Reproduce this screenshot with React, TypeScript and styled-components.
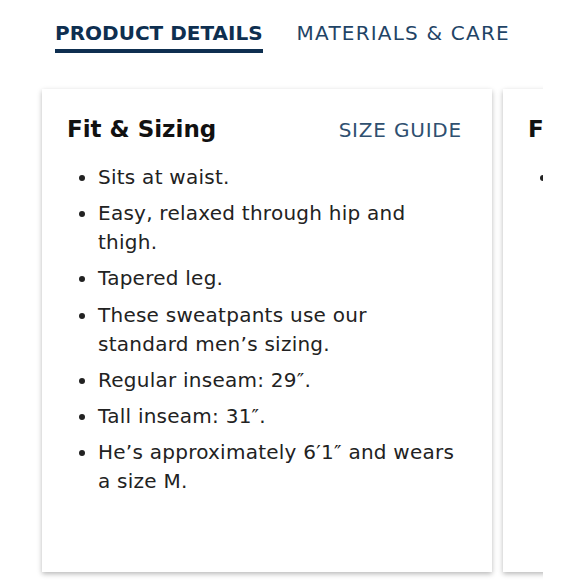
import styled, { createGlobalStyle } from 'styled-components';

const Global = createGlobalStyle`
  html, body {
    margin: 0;
    background: #fff;
  }
  body {
    font-family: "DejaVu Sans", "Liberation Sans", sans-serif;
  }
`

const Page = styled.div`
  width: 579px;
  height: 580px;
  overflow: hidden;
`

const Tabs = styled.div`
  display: flex;
  gap: 34px;
  padding: 19px 0 0 55px;
  height: 70px;
  box-sizing: border-box;
`

const Tab = styled.div<{ $active?: boolean }>`
  font-size: 20px;
  line-height: 28px;
  letter-spacing: ${p => (p.$active ? '0' : '1.2px')};
  color: ${p => (p.$active ? '#0e2f50' : '#1f4466')};
  font-weight: ${p => (p.$active ? 700 : 400)};
  height: 30px;
  border-bottom: 4px solid ${p => (p.$active ? '#0e2f50' : 'transparent')};
`

const Viewport = styled.div`
  width: 543px;
  overflow: hidden;
  padding: 19px 0 8px 42px;
  box-sizing: border-box;
`

const Track = styled.div`
  display: flex;
  gap: 11px;
`

const Card = styled.div`
  flex: none;
  width: 450px;
  height: 483px;
  box-sizing: border-box;
  padding: 24px 25px;
  background: #fff;
  box-shadow: 0 2px 5px rgba(0, 0, 0, 0.28);
`

const CardHead = styled.div`
  display: flex;
  justify-content: space-between;
  align-items: baseline;
`

const Title = styled.h3`
  margin: 0;
  font-size: 23px;
  line-height: 32px;
  font-weight: 700;
  color: #111;
`

const Guide = styled.a`
  font-size: 20px;
  color: #2f5070;
  letter-spacing: 0.8px;
  text-decoration: none;
  margin-right: 5px;
`

const List = styled.ul`
  margin: 18px 0 0;
  padding: 0 9px 0 31px;
`

const Item = styled.li`
  font-size: 20px;
  line-height: 29px;
  color: #222;
  margin-bottom: 7.2px;
  letter-spacing: 0.25px;
`

const items = [
  'Sits at waist.',
  'Easy, relaxed through hip and thigh.',
  'Tapered leg.',
  'These sweatpants use our standard men\u2019s sizing.',
  'Regular inseam: 29\u2033.',
  'Tall inseam: 31\u2033.',
  'He\u2019s approximately 6\u20321\u2033 and wears a size M.',
];

export default function App() {
  return (
    <Page>
      <Global />
      <Tabs>
        <Tab $active>PRODUCT DETAILS</Tab>
        <Tab>MATERIALS &amp; CARE</Tab>
      </Tabs>
      <Viewport>
        <Track>
          <Card>
            <CardHead>
              <Title>Fit &amp; Sizing</Title>
              <Guide href="#">SIZE GUIDE</Guide>
            </CardHead>
            <List>
              {items.map(t => (
                <Item key={t}>{t}</Item>
              ))}
            </List>
          </Card>
          <Card>
            <CardHead>
              <Title>Features</Title>
            </CardHead>
            <List>
              <Item>Soft fleece.</Item>
            </List>
          </Card>
        </Track>
      </Viewport>
    </Page>
  );
}
